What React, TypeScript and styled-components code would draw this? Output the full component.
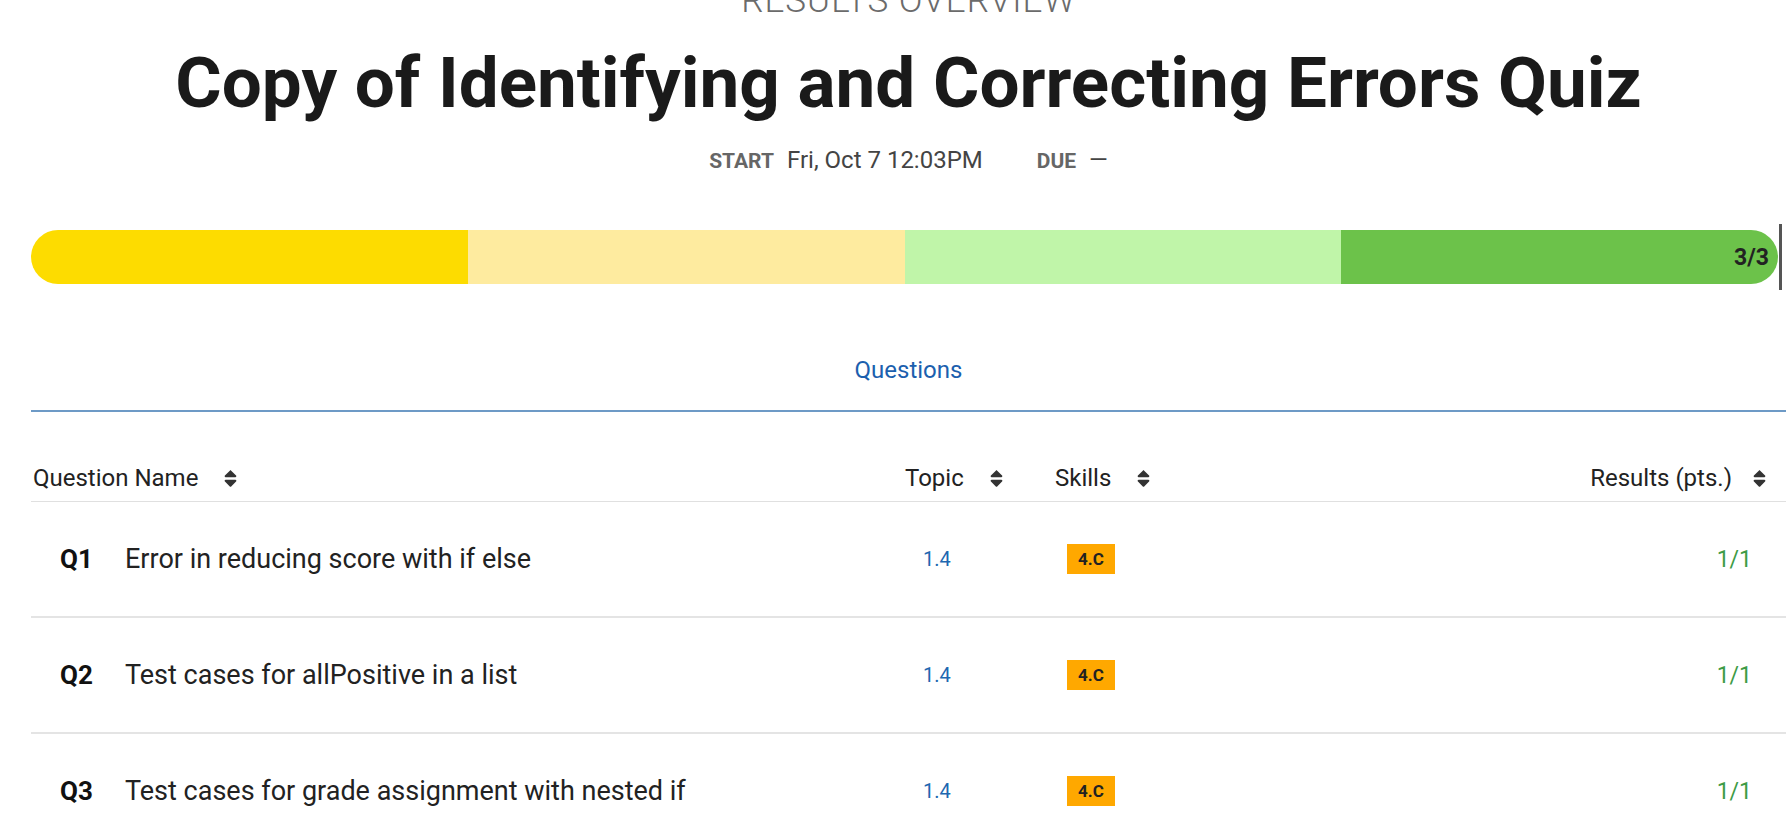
import React from "react";
import styled, { createGlobalStyle } from "styled-components";
import { FaSort } from "react-icons/fa";

const GlobalStyle = createGlobalStyle`
  html, body { margin: 0; padding: 0; background: #fff; overflow: hidden; }
  body { font-family: Roboto, "Noto Sans", Arial, sans-serif; color: #222; }
  * { box-sizing: border-box; }
`;

const Page = styled.main`
  width: 1786px;
  padding-left: 31px;
`;

const Header = styled.header`
  display: flex;
  flex-direction: column;
  align-items: center;
`;

const Overline = styled.div`
  margin-top: -20px;
  font-size: 35px;
  line-height: 42px;
  font-weight: 300;
  letter-spacing: 1px;
  color: #6b6b6b;
  text-transform: uppercase;
`;

const Title = styled.h1`
  margin: 18px 0 0;
  font-size: 71px;
  line-height: 85px;
  font-weight: 700;
  color: #1a1a1a;
`;

const Meta = styled.div`
  margin-top: 19px;
  display: flex;
  align-items: baseline;
  gap: 54px;
  line-height: 32px;
`;

const MetaItem = styled.div`
  display: flex;
  align-items: baseline;
  gap: 13px;
`;

const MetaLabel = styled.span`
  font-size: 21px;
  font-weight: 700;
  color: #666;
  text-transform: uppercase;
`;

const MetaValue = styled.span`
  font-size: 24px;
  color: #444;
`;

const BarWrap = styled.div`
  position: relative;
  margin: 53px 8px 0 0;
`;

const Bar = styled.div`
  display: flex;
  height: 54px;
  border-radius: 27px;
  overflow: hidden;
`;

const Segment = styled.div<{ $color: string }>`
  flex: 1;
  background: ${(p) => p.$color};
  display: flex;
  align-items: center;
  justify-content: flex-end;
  padding-right: 9px;
  font-size: 23px;
  font-weight: 700;
  color: #222;
`;

const Marker = styled.div`
  position: absolute;
  top: -6px;
  bottom: -6px;
  right: -4px;
  width: 3px;
  background: #555;
`;

const Tabs = styled.nav`
  margin-top: 70px;
  display: flex;
  justify-content: center;
  border-bottom: 2px solid #6d9ac6;
`;

const Tab = styled.span`
  font-size: 24px;
  line-height: 32px;
  color: #1c5fae;
  padding-bottom: 24px;
`;

const Grid = styled.div`
  display: grid;
  grid-template-columns: 872px 150px 1fr 300px;
`;

const HeadRow = styled(Grid)`
  margin-top: 50px;
  padding-bottom: 7px;
  border-bottom: 1px solid #e0e0e0;
`;

const HeadCell = styled.div<{ $end?: boolean }>`
  display: flex;
  align-items: center;
  justify-content: ${(p) => (p.$end ? "flex-end" : "flex-start")};
  gap: ${(p) => (p.$end ? "17px" : "22px")};
  padding: ${(p) => (p.$end ? "0 16px 0 0" : "0 0 0 2px")};
  font-size: 24px;
  line-height: 32px;
  color: #222;
  svg { color: #333; flex-shrink: 0; }
`;

const Row = styled(Grid)`
  height: 116px;
  align-items: center;
  border-bottom: 2px solid #e4e4e4;
`;

const NameCell = styled.div`
  display: flex;
  align-items: center;
  padding-left: 29px;
`;

const QNum = styled.span`
  width: 65px;
  font-size: 26px;
  font-weight: 700;
  color: #111;
`;

const QTitle = styled.span`
  font-size: 27px;
  color: #222;
`;

const TopicCell = styled.div`
  padding-left: 20px;
  font-size: 20px;
  color: #2067b0;
`;

const SkillCell = styled.div`
  padding-left: 14px;
`;

const Badge = styled.span`
  display: inline-flex;
  align-items: center;
  height: 30px;
  padding: 0 11px;
  background: #ffa800;
  font-size: 17px;
  font-weight: 700;
  color: #222;
`;

const ResultCell = styled.div`
  text-align: right;
  padding-right: 34px;
  font-size: 23px;
  color: #3d9b46;
`;

const questions = [
  { n: "Q1", title: "Error in reducing score with if else", topic: "1.4", skill: "4.C", result: "1/1" },
  { n: "Q2", title: "Test cases for allPositive in a list", topic: "1.4", skill: "4.C", result: "1/1" },
  { n: "Q3", title: "Test cases for grade assignment with nested if", topic: "1.4", skill: "4.C", result: "1/1" },
];

const segments = ["#fddc00", "#feeb9f", "#c0f5a9", "#6cc24a"];

export default function App() {
  return (
    <>
      <GlobalStyle />
      <Page>
        <Header>
          <Overline>Results Overview</Overline>
          <Title>Copy of Identifying and Correcting Errors Quiz</Title>
          <Meta>
            <MetaItem>
              <MetaLabel>Start</MetaLabel>
              <MetaValue>Fri, Oct 7 12:03PM</MetaValue>
            </MetaItem>
            <MetaItem>
              <MetaLabel>Due</MetaLabel>
              <MetaValue>—</MetaValue>
            </MetaItem>
          </Meta>
        </Header>
        <BarWrap>
          <Bar>
            {segments.map((c, i) => (
              <Segment key={c} $color={c}>
                {i === segments.length - 1 ? "3/3" : null}
              </Segment>
            ))}
          </Bar>
          <Marker />
        </BarWrap>
        <Tabs>
          <Tab>Questions</Tab>
        </Tabs>
        <HeadRow>
          <HeadCell>
            Question Name <FaSort size={21} />
          </HeadCell>
          <HeadCell>
            Topic <FaSort size={21} />
          </HeadCell>
          <HeadCell>
            Skills <FaSort size={21} />
          </HeadCell>
          <HeadCell $end>
            Results (pts.) <FaSort size={21} />
          </HeadCell>
        </HeadRow>
        {questions.map((q) => (
          <Row key={q.n}>
            <NameCell>
              <QNum>{q.n}</QNum>
              <QTitle>{q.title}</QTitle>
            </NameCell>
            <TopicCell>{q.topic}</TopicCell>
            <SkillCell>
              <Badge>{q.skill}</Badge>
            </SkillCell>
            <ResultCell>{q.result}</ResultCell>
          </Row>
        ))}
      </Page>
    </>
  );
}
